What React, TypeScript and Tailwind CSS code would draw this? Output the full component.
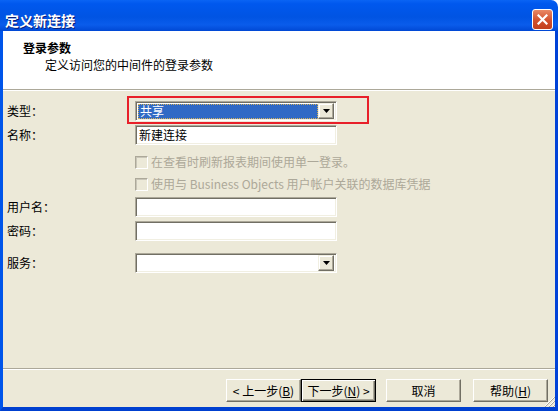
import type { ReactNode } from "react";

const FONT = "font-['SimSun','Noto_Sans_CJK_SC',sans-serif]";

const sunken =
  "border border-t-[#ACA899] border-l-[#ACA899] border-b-white border-r-white shadow-[inset_1px_1px_0_#716F64,inset_-1px_-1px_0_#F1EFE2]";

function Label({ children }: { children: ReactNode }) {
  return <div className="w-[132px] shrink-0 pl-[4px] text-[12px] leading-[14px] text-black">{children}</div>;
}

function DropArrow() {
  return (
    <div className="flex h-[16px] w-[16px] items-center justify-center border border-t-[#F1EFE2] border-l-[#F1EFE2] border-b-[#716F64] border-r-[#716F64] bg-[#ECE9D8] shadow-[inset_-1px_-1px_0_#ACA899,inset_1px_1px_0_white]">
      <svg width="7" height="4" viewBox="0 0 7 4">
        <path d="M0 0h7L3.5 4z" fill="#000" />
      </svg>
    </div>
  );
}

function Check({ children }: { children: ReactNode }) {
  return (
    <div className="flex items-center gap-[3px] pl-[132px] text-[12px] leading-[14px] text-[#ACA899]">
      <div className="h-[13px] w-[13px] border border-t-[#ACA899] border-l-[#ACA899] border-b-white border-r-white bg-[#ECE9D8] shadow-[inset_1px_1px_0_#C9C6B8]" />
      <span>{children}</span>
    </div>
  );
}

function Button({ children, primary }: { children: ReactNode; primary?: boolean }) {
  return (
    <div
      className={
        "flex h-[23px] w-[75px] items-center justify-center bg-[#ECE9D8] text-[12px] text-black " +
        (primary
          ? "border border-black shadow-[inset_1px_1px_0_white,inset_-1px_-1px_0_#716F64,inset_-2px_-2px_0_#ACA899]"
          : "border border-t-white border-l-white border-b-[#716F64] border-r-[#716F64] shadow-[inset_-1px_-1px_0_#ACA899]")
      }
    >
      {children}
    </div>
  );
}

export default function App() {
  return (
    <div className={`flex h-[411px] w-[559px] flex-col bg-white ${FONT}`}>
      {/* title bar */}
      <div className="mr-[1px] flex h-[31px] shrink-0 items-center justify-between rounded-tr-[7px] bg-[linear-gradient(#0A64F4_0%,#0058EE_12%,#0054E3_55%,#0A5CEB_80%,#0048D4_100%)] pl-[5px] pr-[5px] pt-[8px]">
        <span className="text-[14px] font-bold leading-none text-white [text-shadow:1px_1px_0_#0A1E78]">定义新连接</span>
        <div className="flex h-[21px] w-[21px] items-center justify-center rounded-[3px] border border-white bg-[linear-gradient(#E98966,#D2502D_55%,#C2401E)]">
          <svg width="11" height="11" viewBox="0 0 11 11">
            <path d="M1.5 1.5l8 8M9.5 1.5l-8 8" stroke="#fff" strokeWidth="2.2" strokeLinecap="square" />
          </svg>
        </div>
      </div>

      {/* body */}
      <div className="mr-[1px] flex flex-1 flex-col border-l-[3px] border-r-[3px] border-b-[4px] border-l-[#0055EA] border-r-[#0042D8] border-b-[#0040D0] bg-[#ECE9D8]">
        {/* header */}
        <div className="h-[59px] shrink-0 border-b border-b-[#ACA899] bg-white pl-[20px] pt-[10px] text-[12px] leading-[14px] text-black shadow-[0_1px_0_white]">
          <div className="font-bold">登录参数</div>
          <div className="mt-[3px] pl-[22px]">定义访问您的中间件的登录参数</div>
        </div>

        {/* form */}
        <div className="relative flex flex-1 flex-col pt-[11px]">
          <div className="flex items-center">
            <Label>类型：</Label>
            <div className={`flex h-[20px] w-[202px] items-center justify-between bg-white pl-[2px] pr-[2px] ${sunken}`}>
              <div className="flex h-[15px] w-[180px] items-center border border-dotted border-[#D7B35A] bg-[#316AC5] pl-[1px] text-[12px] leading-none text-white">
                共享
              </div>
              <DropArrow />
            </div>
          </div>
          {/* annotation highlight */}
          <div className="absolute left-[124px] top-[6px] h-[28px] w-[242px] border-2 border-[#E8202A]" />

          <div className="mt-[4px] flex items-center">
            <Label>名称：</Label>
            <div className={`flex h-[20px] w-[202px] items-center bg-white pl-[3px] text-[12px] text-black ${sunken}`}>新建连接</div>
          </div>

          <div className="mt-[10px]">
            <Check>在查看时刷新报表期间使用单一登录。</Check>
          </div>
          <div className="mt-[8px]">
            <Check>使用与 Business Objects 用户帐户关联的数据库凭据</Check>
          </div>

          <div className="mt-[6px] flex items-center">
            <Label>用户名：</Label>
            <div className={`h-[20px] w-[202px] bg-white ${sunken}`} />
          </div>
          <div className="mt-[4px] flex items-center">
            <Label>密码：</Label>
            <div className={`h-[20px] w-[202px] bg-white ${sunken}`} />
          </div>
          <div className="mt-[12px] flex items-center">
            <Label>服务：</Label>
            <div className={`flex h-[20px] w-[202px] items-center justify-end bg-white pr-[2px] ${sunken}`}>
              <DropArrow />
            </div>
          </div>
        </div>

        {/* footer */}
        <div className="relative shrink-0 border-t border-t-[#ACA899] pt-[10px] pb-[5px] shadow-[inset_0_1px_0_white]">
          <div className="flex justify-end pr-[7px]">
            <Button>
              &lt; 上一步(<u>B</u>)
            </Button>
            <Button primary>
              下一步(<u>N</u>) &gt;
            </Button>
            <div className="ml-[10px]">
              <Button>取消</Button>
            </div>
            <div className="ml-[12px]">
              <Button>
                帮助(<u>H</u>)
              </Button>
            </div>
          </div>
          <svg className="absolute bottom-0 right-0" width="12" height="12" viewBox="0 0 12 12">
            <path d="M11 2L2 11M11 6L6 11M11 10L10 11" stroke="#fff" strokeWidth="1" />
            <path d="M12 2L2 12M12 6L6 12M12 10L10 12" stroke="#ACA899" strokeWidth="1" />
          </svg>
        </div>
      </div>
    </div>
  );
}
